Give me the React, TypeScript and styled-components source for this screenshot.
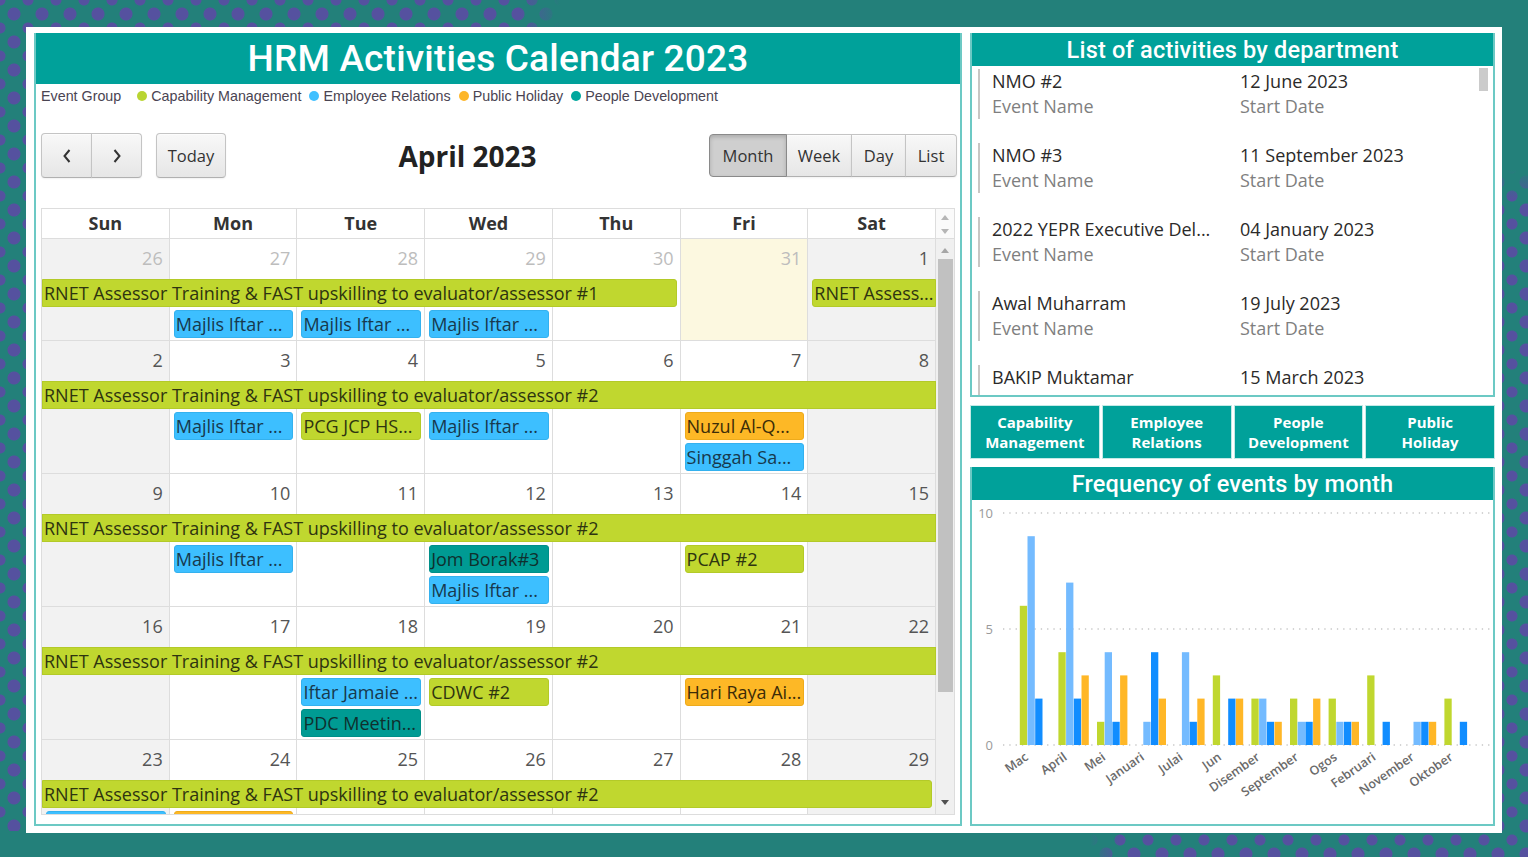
import React from 'react';
import styled, { createGlobalStyle } from 'styled-components';

const GlobalStyle = createGlobalStyle`
  html, body {
    margin: 0;
    padding: 0;
  }
  body {
    width: 1528px;
    height: 857px;
    overflow: hidden;
    font-family: 'Open Sans', sans-serif;
    background-color: #23807a;
    background-image:
      linear-gradient(90deg, rgba(35, 128, 122, 0) 520px, #23807a 560px),
      linear-gradient(90deg, #23807a 1090px, rgba(35, 128, 122, 0) 1120px),
      linear-gradient(180deg, #23807a 170px, rgba(35, 128, 122, 0) 200px),
      radial-gradient(circle, #55519f 6px, transparent 7px),
      radial-gradient(circle, #55519f 5px, transparent 6px);
    background-size: 100% 27px, 100% 26px, 26px 100%, 28px 28px, 28px 28px;
    background-position: 0 0, 0 100%, 100% 0, 0 0, 14px 14px;
    background-repeat: no-repeat, no-repeat, no-repeat, repeat, repeat;
  }
`;

type Tone = 'lime' | 'blue' | 'orange' | 'teal';

const TONES: Record<Tone, { bg: string; border: string; text: string }> = {
  lime: { bg: '#c0d72f', border: '#b3ca28', text: '#2e3410' },
  blue: { bg: '#3dbfff', border: '#34b1ee', text: '#17394d' },
  orange: { bg: '#fdb826', border: '#eeab1c', text: '#3c2c08' },
  teal: { bg: '#009b93', border: '#008f88', text: '#0f302e' },
};

interface CalEvent {
  title: string;
  col: number;
  span: number;
  row: number;
  tone: Tone;
  openL?: boolean;
  openR?: boolean;
}

interface Day {
  n: number;
  other?: boolean;
  today?: boolean;
}

interface Week {
  days: Day[];
  rows: number;
  events: CalEvent[];
}

const RNET2 = 'RNET Assessor Training & FAST upskilling to evaluator/assessor #2';
const MAJLIS = 'Majlis Iftar ...';

const days = (from: number): Day[] =>
  Array.from({ length: 7 }, (_, i) => ({ n: from + i }));

const WEEKS: Week[] = [
  {
    days: [
      { n: 26, other: true },
      { n: 27, other: true },
      { n: 28, other: true },
      { n: 29, other: true },
      { n: 30, other: true },
      { n: 31, other: true, today: true },
      { n: 1 },
    ],
    rows: 2,
    events: [
      { title: 'RNET Assessor Training & FAST upskilling to evaluator/assessor #1', col: 1, span: 5, row: 1, tone: 'lime', openL: true },
      { title: 'RNET Assess...', col: 7, span: 1, row: 1, tone: 'lime', openR: true },
      { title: MAJLIS, col: 2, span: 1, row: 2, tone: 'blue' },
      { title: MAJLIS, col: 3, span: 1, row: 2, tone: 'blue' },
      { title: MAJLIS, col: 4, span: 1, row: 2, tone: 'blue' },
    ],
  },
  {
    days: days(2),
    rows: 3,
    events: [
      { title: RNET2, col: 1, span: 7, row: 1, tone: 'lime', openL: true, openR: true },
      { title: MAJLIS, col: 2, span: 1, row: 2, tone: 'blue' },
      { title: 'PCG JCP HS...', col: 3, span: 1, row: 2, tone: 'lime' },
      { title: MAJLIS, col: 4, span: 1, row: 2, tone: 'blue' },
      { title: 'Nuzul Al-Q...', col: 6, span: 1, row: 2, tone: 'orange' },
      { title: 'Singgah Sa...', col: 6, span: 1, row: 3, tone: 'blue' },
    ],
  },
  {
    days: days(9),
    rows: 3,
    events: [
      { title: RNET2, col: 1, span: 7, row: 1, tone: 'lime', openL: true, openR: true },
      { title: MAJLIS, col: 2, span: 1, row: 2, tone: 'blue' },
      { title: 'Jom Borak#3', col: 4, span: 1, row: 2, tone: 'teal' },
      { title: 'PCAP #2', col: 6, span: 1, row: 2, tone: 'lime' },
      { title: MAJLIS, col: 4, span: 1, row: 3, tone: 'blue' },
    ],
  },
  {
    days: days(16),
    rows: 3,
    events: [
      { title: RNET2, col: 1, span: 7, row: 1, tone: 'lime', openL: true, openR: true },
      { title: 'Iftar Jamaie ...', col: 3, span: 1, row: 2, tone: 'blue' },
      { title: 'CDWC #2', col: 4, span: 1, row: 2, tone: 'lime' },
      { title: 'Hari Raya Ai...', col: 6, span: 1, row: 2, tone: 'orange' },
      { title: 'PDC Meetin...', col: 3, span: 1, row: 3, tone: 'teal' },
    ],
  },
  {
    days: days(23),
    rows: 3,
    events: [
      { title: RNET2, col: 1, span: 7, row: 1, tone: 'lime', openL: true },
      // only the top edge of these two shows above the fold
      { title: '', col: 1, span: 1, row: 2, tone: 'blue' },
      { title: '', col: 2, span: 1, row: 2, tone: 'orange' },
    ],
  },
];

const LEGEND: { label: string; color: string }[] = [
  { label: 'Capability Management', color: '#b9d532' },
  { label: 'Employee Relations', color: '#41c0ff' },
  { label: 'Public Holiday', color: '#fdb62a' },
  { label: 'People Development', color: '#00a79d' },
];

const ACTIVITIES = [
  { name: 'NMO #2', date: '12 June 2023' },
  { name: 'NMO #3', date: '11 September 2023' },
  { name: '2022 YEPR Executive Del...', date: '04 January 2023' },
  { name: 'Awal Muharram', date: '19 July 2023' },
  { name: 'BAKIP Muktamar', date: '15 March 2023' },
];

const SLICERS = [
  ['Capability', 'Management'],
  ['Employee', 'Relations'],
  ['People', 'Development'],
  ['Public', 'Holiday'],
];

// lime, light blue, blue, orange
const FREQ: [string, number[]][] = [
  ['Mac', [6, 9, 2, 0]],
  ['April', [4, 7, 2, 3]],
  ['Mei', [1, 4, 1, 3]],
  ['Januari', [0, 1, 4, 2]],
  ['Julai', [0, 4, 1, 2]],
  ['Jun', [3, 0, 2, 2]],
  ['Disember', [2, 2, 1, 1]],
  ['September', [2, 1, 1, 2]],
  ['Ogos', [2, 1, 1, 1]],
  ['Februari', [3, 0, 1, 0]],
  ['November', [0, 1, 1, 1]],
  ['Oktober', [2, 0, 1, 0]],
];
const BAR_COLORS = ['#c0d72f', '#74bbff', '#118dff', '#ffb727'];

/* ---------- page frame ---------- */

const Page = styled.div`
  padding: 27px 26px 0 26px;
`;

const Frame = styled.div`
  width: 1476px;
  height: 806px;
  box-sizing: border-box;
  background: #fff;
  padding: 6px 7px 7px 8px;
  display: grid;
  grid-template-columns: 928px 525px;
  column-gap: 8px;
`;

const Panel = styled.section`
  border: 2px solid #6cc9c4;
  border-top: 0;
  box-sizing: border-box;
  display: flex;
  flex-direction: column;
  min-height: 0;
  overflow: hidden;
`;

const ListPanel = styled(Panel)`
  height: 364px;
  flex-shrink: 0;
`;

const PanelTitle = styled.h1<{ $h: number; $size: number }>`
  margin: 0 -2px;
  height: ${({ $h }) => $h}px;
  flex-shrink: 0;
  background: #00a19a;
  color: #fff;
  font: 500 ${({ $size }) => $size}px Roboto, sans-serif;
  display: flex;
  align-items: center;
  justify-content: center;
  letter-spacing: 0.2px;
`;

const SideColumn = styled.div`
  display: flex;
  flex-direction: column;
  gap: 8px;
  min-height: 0;
`;

/* ---------- legend + toolbar ---------- */

const Legend = styled.div`
  display: flex;
  align-items: center;
  margin-top: 2px;
  padding-left: 5px;
  height: 20px;
  font: 14.3px 'Liberation Sans', Arial, sans-serif;
  color: #4a4452;
`;

const LegendTitle = styled.span`
  margin-right: 16px;
`;

const LegendItem = styled.span`
  display: flex;
  align-items: center;
  gap: 4px;
  margin-right: 8px;
`;

const Dot = styled.i<{ $color: string }>`
  width: 10px;
  height: 10px;
  border-radius: 50%;
  background: ${({ $color }) => $color};
`;

const Toolbar = styled.div`
  display: flex;
  align-items: center;
  margin-top: 27px;
  padding: 0 3px 0 5px;
  height: 45px;
`;

const BtnGroup = styled.div`
  display: flex;
`;

const CalBtn = styled.button<{ $w: number; $h: number; $active?: boolean; $edge?: 'l' | 'r' | 'm' | 'lr' }>`
  width: ${({ $w }) => $w}px;
  height: ${({ $h }) => $h}px;
  padding: 0;
  display: flex;
  align-items: center;
  justify-content: center;
  font: 16.5px 'Open Sans', sans-serif;
  color: #333;
  border: 1px solid #c4c4c4;
  border-bottom-color: #b0b0b0;
  margin-left: ${({ $edge }) => ($edge === 'm' || $edge === 'r' ? '-1px' : '0')};
  border-radius: ${({ $edge }) =>
    $edge === 'l' ? '4px 0 0 4px' : $edge === 'r' ? '0 4px 4px 0' : $edge === 'm' ? '0' : '4px'};
  background: ${({ $active }) =>
    $active ? '#cfcfcf' : 'linear-gradient(#f8f8f8, #e6e6e6)'};
  box-shadow: ${({ $active }) =>
    $active ? 'inset 0 2px 4px rgba(0,0,0,0.18)' : 'inset 0 1px 0 rgba(255,255,255,0.6), 0 1px 2px rgba(0,0,0,0.06)'};
  ${({ $active }) => ($active ? 'border-color: #8a8a8a; position: relative; z-index: 1;' : '')}
`;

const TodayBtn = styled(CalBtn)`
  margin-left: 14px;
`;

const MonthTitle = styled.h2`
  flex: 1;
  margin: 0;
  text-align: center;
  font: 700 28px 'Open Sans', sans-serif;
  color: #222;
`;

const Chevron = ({ dir }: { dir: 'l' | 'r' }) => (
  <svg width="10" height="16" viewBox="0 0 10 16">
    <polyline
      points={dir === 'l' ? '7.5,2 2.5,8 7.5,14' : '2.5,2 7.5,8 2.5,14'}
      fill="none"
      stroke="#333"
      strokeWidth="2"
    />
  </svg>
);

/* ---------- calendar grid ---------- */

const Calendar = styled.div`
  margin: 30px 5px 0 5px;
  border: 1px solid #ddd;
  display: flex;
  flex-direction: column;
`;

const HeadRow = styled.div`
  display: flex;
  height: 29px;
  border-bottom: 1px solid #ddd;
`;

const HeadCells = styled.div`
  flex: 1;
  display: grid;
  grid-template-columns: repeat(7, 1fr);
`;

const HeadCell = styled.div`
  border-right: 1px solid #ddd;
  text-align: center;
  font: 700 18px/29px 'Open Sans', sans-serif;
  color: #333;
`;

const Gutter = styled.div<{ $bg: string }>`
  width: 18px;
  flex-shrink: 0;
  background: ${({ $bg }) => $bg};
  display: flex;
  flex-direction: column;
  align-items: center;
`;

const Arrow = ({ up, color = '#a6a6a6' }: { up?: boolean; color?: string }) => (
  <svg width="8" height="5" viewBox="0 0 8 5">
    <polygon points={up ? '0,5 4,0 8,5' : '0,0 4,5 8,0'} fill={color} />
  </svg>
);

const HeadArrows = styled.div`
  display: flex;
  flex-direction: column;
  gap: 9px;
  margin-top: 6px;
`;

const Body = styled.div`
  display: flex;
  height: 575px;
  overflow: hidden;
`;

const Weeks = styled.div`
  flex: 1;
  display: flex;
  flex-direction: column;
  overflow: hidden;
`;

const WeekRow = styled.div<{ $rows: number }>`
  display: grid;
  grid-template-columns: repeat(7, 1fr);
  grid-template-rows: 40px repeat(${({ $rows }) => $rows}, 31px);
  flex-shrink: 0;
`;

const DayCell = styled.div<{ $col: number; $bg: string; $other?: boolean }>`
  grid-column: ${({ $col }) => $col};
  grid-row: 1 / -1;
  background: ${({ $bg }) => $bg};
  border-right: 1px solid #ddd;
  border-bottom: 1px solid #ddd;
  box-sizing: border-box;
  text-align: right;
  padding: 7px 6px 0 0;
  font: 18px/24px 'Open Sans', sans-serif;
  color: ${({ $other }) => ($other ? '#bdbdbd' : '#555')};
`;

const Chip = styled.div<{
  $tone: Tone;
  $col: number;
  $span: number;
  $row: number;
  $openL?: boolean;
  $openR?: boolean;
}>`
  grid-column: ${({ $col, $span }) => `${$col} / span ${$span}`};
  grid-row: ${({ $row }) => $row + 1};
  height: 28px;
  box-sizing: border-box;
  margin: 0 ${({ $openR }) => ($openR ? 0 : 4)}px 0 ${({ $openL }) => ($openL ? 0 : 4)}px;
  padding: 0 2px 0 1px;
  background: ${({ $tone }) => TONES[$tone].bg};
  border: 1px solid ${({ $tone }) => TONES[$tone].border};
  border-radius: ${({ $openL, $openR }) =>
    `${$openL ? 0 : 3}px ${$openR ? 0 : 3}px ${$openR ? 0 : 3}px ${$openL ? 0 : 3}px`};
  color: ${({ $tone }) => TONES[$tone].text};
  font: 18px/26px 'Open Sans', sans-serif;
  white-space: nowrap;
  overflow: hidden;
`;

const Thumb = styled.div`
  width: 15px;
  height: 433px;
  margin: 6px 0 0 1px;
  background: #c1c1c1;
`;

const TrackTop = styled.div`
  margin-top: 9px;
  display: flex;
`;

const TrackBottom = styled.div`
  margin-top: auto;
  margin-bottom: 9px;
  display: flex;
`;

/* ---------- activity list ---------- */

const ListBody = styled.div`
  position: relative;
  flex: 1;
  overflow: hidden;
  display: flex;
  flex-direction: column;
  gap: 24px;
  padding: 3px 0 0 6px;
`;

const ListItem = styled.div`
  flex-shrink: 0;
  display: grid;
  grid-template-columns: 248px 1fr;
  border-left: 2px solid #c8c6c4;
  padding-left: 12px;
  font: 18px/25px 'Open Sans', sans-serif;
`;

const ItemValue = styled.span`
  color: #2b2a29;
  white-space: nowrap;
`;

const ItemLabel = styled.span`
  color: #7f7f7f;
`;

const ListThumb = styled.div`
  position: absolute;
  top: 2px;
  right: 5px;
  width: 9px;
  height: 23px;
  background: #cbcbcb;
`;

/* ---------- slicer ---------- */

const Slicer = styled.div`
  height: 54px;
  flex-shrink: 0;
  display: grid;
  grid-template-columns: repeat(4, 1fr);
  gap: 2px;
`;

const SlicerBtn = styled.button`
  background: #00a19a;
  border: 1px solid #c4e9e6;
  color: #fff;
  font: 700 15px/20px 'Open Sans', sans-serif;
  padding: 0;
`;

/* ---------- chart ---------- */

const ChartPanel = styled(Panel)`
  flex: 1;
`;

const ChartBody = styled.div`
  flex: 1;
`;

const X0 = 47.8;
const PITCH = 38.6;
const BW = 7.7;
const Y0 = 245;
const UNIT = 23.2;

const FrequencyChart = () => (
  <svg width="521" height="324" viewBox="0 0 521 324">
    {[10, 5, 0].map((v) => (
      <g key={v}>
        <line
          x1="31"
          x2="518"
          y1={Y0 - v * UNIT}
          y2={Y0 - v * UNIT}
          stroke="#c6c6c6"
          strokeWidth="1.3"
          strokeDasharray="1.3 5"
        />
        <text
          x="21"
          y={Y0 - v * UNIT + 4.5}
          textAnchor="end"
          fontFamily="'Open Sans', sans-serif"
          fontSize="13"
          fill="#9a9a9a"
        >
          {v}
        </text>
      </g>
    ))}
    {FREQ.map(([month, vals], i) => {
      const gx = X0 + i * PITCH;
      return (
        <g key={month}>
          {vals.map((v, j) =>
            v > 0 ? (
              <rect
                key={j}
                x={gx + j * BW}
                y={Y0 - v * UNIT}
                width={BW - 0.4}
                height={v * UNIT}
                fill={BAR_COLORS[j]}
              />
            ) : null
          )}
          <text
            transform={`translate(${gx + 15.4 - 6} 259) rotate(-35)`}
            textAnchor="end"
            fontFamily="'Open Sans', sans-serif"
            fontWeight="600"
            fontSize="12.5"
            fill="#6a6a6a"
          >
            {month}
          </text>
        </g>
      );
    })}
  </svg>
);

const DAY_NAMES = ['Sun', 'Mon', 'Tue', 'Wed', 'Thu', 'Fri', 'Sat'];

const cellBg = (col: number, day: Day) => {
  if (day.today) return '#fcf8e0';
  if (col === 1 || col === 7) return '#f2f2f2';
  return '#fff';
};

export default function App() {
  return (
    <Page>
      <GlobalStyle />
      <Frame>
        <Panel>
          <PanelTitle $h={51} $size={37}>
            HRM Activities Calendar 2023
          </PanelTitle>
          <Legend>
            <LegendTitle>Event Group</LegendTitle>
            {LEGEND.map((l) => (
              <LegendItem key={l.label}>
                <Dot $color={l.color} />
                {l.label}
              </LegendItem>
            ))}
          </Legend>
          <Toolbar>
            <BtnGroup>
              <CalBtn $w={51} $h={45} $edge="l">
                <Chevron dir="l" />
              </CalBtn>
              <CalBtn $w={51} $h={45} $edge="r">
                <Chevron dir="r" />
              </CalBtn>
            </BtnGroup>
            <TodayBtn $w={70} $h={45} $edge="lr">
              Today
            </TodayBtn>
            <MonthTitle>April 2023</MonthTitle>
            <BtnGroup>
              <CalBtn $w={78} $h={43} $edge="l" $active>
                Month
              </CalBtn>
              <CalBtn $w={66} $h={43} $edge="m">
                Week
              </CalBtn>
              <CalBtn $w={55} $h={43} $edge="m">
                Day
              </CalBtn>
              <CalBtn $w={52} $h={43} $edge="r">
                List
              </CalBtn>
            </BtnGroup>
          </Toolbar>
          <Calendar>
            <HeadRow>
              <HeadCells>
                {DAY_NAMES.map((d) => (
                  <HeadCell key={d}>{d}</HeadCell>
                ))}
              </HeadCells>
              <Gutter $bg="#fafafa">
                <HeadArrows>
                  <Arrow up color="#b5b5b5" />
                  <Arrow color="#b5b5b5" />
                </HeadArrows>
              </Gutter>
            </HeadRow>
            <Body>
              <Weeks>
                {WEEKS.map((w, wi) => (
                  <WeekRow key={wi} $rows={w.rows}>
                    {w.days.map((d, di) => (
                      <DayCell key={di} $col={di + 1} $bg={cellBg(di + 1, d)} $other={d.other}>
                        {d.n}
                      </DayCell>
                    ))}
                    {w.events.map((e, ei) => (
                      <Chip
                        key={ei}
                        $tone={e.tone}
                        $col={e.col}
                        $span={e.span}
                        $row={e.row}
                        $openL={e.openL}
                        $openR={e.openR}
                      >
                        {e.title}
                      </Chip>
                    ))}
                  </WeekRow>
                ))}
              </Weeks>
              <Gutter $bg="#f0f0f0">
                <TrackTop>
                  <Arrow up />
                </TrackTop>
                <Thumb />
                <TrackBottom>
                  <Arrow color="#505050" />
                </TrackBottom>
              </Gutter>
            </Body>
          </Calendar>
        </Panel>

        <SideColumn>
          <ListPanel>
            <PanelTitle $h={33} $size={23.5}>
              List of activities by department
            </PanelTitle>
            <ListBody>
              {ACTIVITIES.map((a) => (
                <ListItem key={a.name}>
                  <ItemValue>{a.name}</ItemValue>
                  <ItemValue>{a.date}</ItemValue>
                  <ItemLabel>Event Name</ItemLabel>
                  <ItemLabel>Start Date</ItemLabel>
                </ListItem>
              ))}
              <ListThumb />
            </ListBody>
          </ListPanel>
          <Slicer>
            {SLICERS.map(([a, b]) => (
              <SlicerBtn key={a}>
                {a}
                <br />
                {b}
              </SlicerBtn>
            ))}
          </Slicer>
          <ChartPanel>
            <PanelTitle $h={33} $size={23.5}>
              Frequency of events by month
            </PanelTitle>
            <ChartBody>
              <FrequencyChart />
            </ChartBody>
          </ChartPanel>
        </SideColumn>
      </Frame>
    </Page>
  );
}
